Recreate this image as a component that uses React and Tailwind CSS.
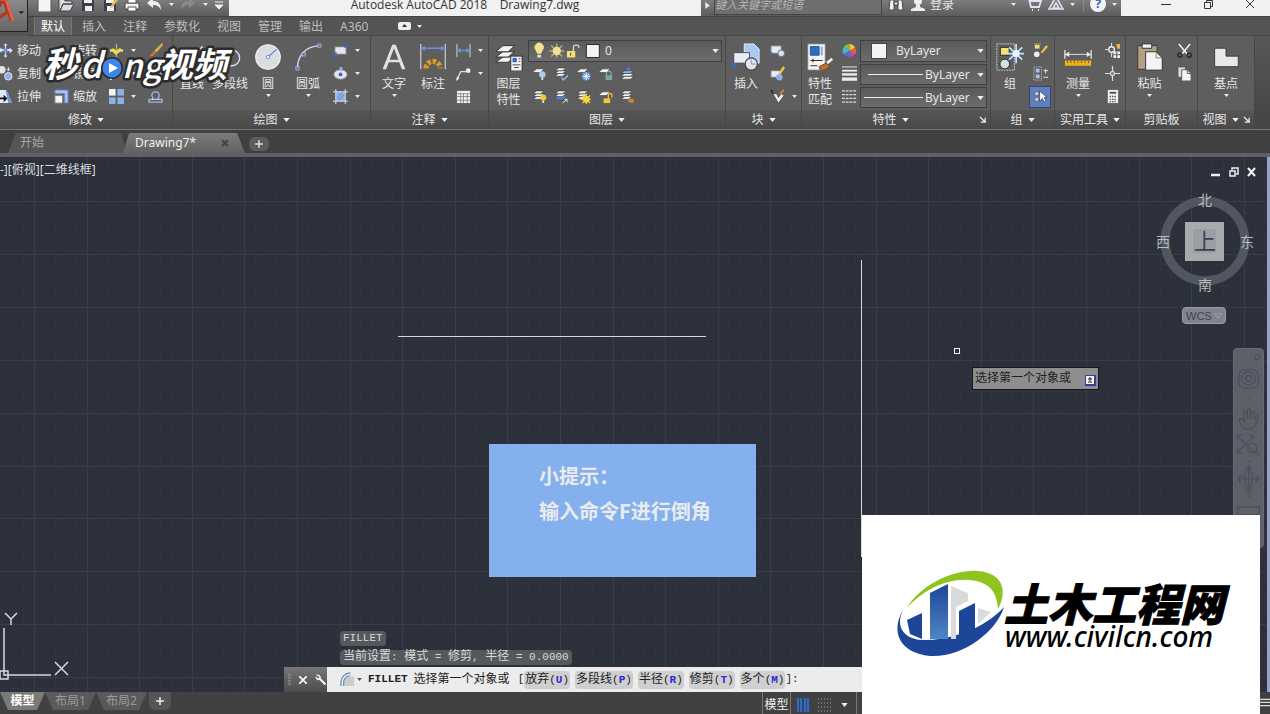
import React, { useState } from "react";

const Caret = ({ className = "w-[6px] h-[4px]" }) => (
  <svg viewBox="0 0 8 5" className={className} fill="#eeeeee" aria-hidden="true">
    <path d="M0 0h8L4 5z" />
  </svg>
);

const Svg = ({ box = 16, className = "w-4 h-4", children }) => (
  <svg viewBox={`0 0 ${box} ${box}`} className={className} fill="none" aria-hidden="true">
    {children}
  </svg>
);

// one stack of sheets, reused by most of the layer icons
const Sheets = () => (
  <g fill="#f0f0f0" stroke="#333" strokeWidth="0.6">
    <path d="M1 11l4-3h8l-4 3z" />
    <path d="M1 8l4-3h8L9 8z" />
    <path d="M1 5l4-3h8L9 5z" />
  </g>
);

const Sheet = () => <path d="M0 7l5-4h8L9 7z" fill="#f0f0f0" stroke="#333" strokeWidth="0.6" />;

const small = {
  move: (
    <>
      <path d="M8 0l3 3H9v3h3V4l4 4-4 4V9H9v4h2l-3 3-3-3h2V9H4v2L0 8l4-4v2h3V3H5z" fill="#dfe6f5" stroke="#3b4a6b" strokeWidth="0.6" />
      <rect x="6" y="6" width="4" height="4" fill="#6f93d8" />
    </>
  ),
  copy: (
    <>
      <circle cx="4" cy="4" r="4" fill="#e4e4e4" />
      <circle cx="11" cy="11" r="4" fill="#8fb0e6" stroke="#dfe8f7" />
      <path d="M11 1v4M9 3l2 2 2-2" stroke="#eee" />
    </>
  ),
  stretch: (
    <>
      <path d="M2 1h7l6 14H2z" fill="#dfe8f7" />
      <path d="M9 1l6 14h-4L8 1z" fill="#6f93d8" />
      <path d="M1 9h5V6l4 4-4 4v-3H1z" fill="#111" />
    </>
  ),
  rotate: (
    <>
      <path d="M3 10a5 5 0 1 1 5 5" stroke="#dfe8f7" strokeWidth="2" />
      <path d="M8 12v4l-4-2z" fill="#dfe8f7" />
    </>
  ),
  mirror: (
    <>
      <path d="M7 2v12H1z" fill="#eee" />
      <path d="M9 2v12h6z" fill="#6f93d8" />
    </>
  ),
  scale: (
    <>
      <path d="M1 1h14v14h-4V5H1z" fill="#a9c3f0" stroke="#5b7fc4" />
      <rect x="1" y="7" width="8" height="8" fill="#f4f4f4" stroke="#888" />
    </>
  ),
  trim: (
    <>
      <path d="M1 8h6M10 8h5" stroke="#eee" strokeWidth="2" />
      <path d="M8 1v14" stroke="#8fb0e6" strokeWidth="1.5" />
    </>
  ),
  fillet: <path d="M2 15V9a7 7 0 0 1 7-7h5" stroke="#dfe8f7" strokeWidth="2" />,
  array: (
    <>
      <rect x="0" y="0" width="7" height="7" fill="#f4f4f4" />
      <rect x="9" y="0" width="7" height="7" fill="#8fb0e6" />
      <rect x="0" y="9" width="7" height="7" fill="#8fb0e6" />
      <rect x="9" y="9" width="7" height="7" fill="#8fb0e6" />
    </>
  ),
  erase: (
    <>
      <path d="M15 0L7 8l2 2 7-8z" fill="#e5b04a" />
      <path d="M7 8l2 2-4 4H1z" fill="#c9713a" />
    </>
  ),
  offset: (
    <>
      <path d="M1 14h14v-3h-3c-2 0-1-2 0-4a4 4 0 1 0-8 0c1 2 2 4 0 4H1z" stroke="#9db9ea" strokeWidth="1.4" />
      <path d="M4 11h8" stroke="#dfe8f7" />
    </>
  ),
  rect: (
    <>
      <rect x="2" y="4" width="12" height="8" fill="#e2e5ec" stroke="#777" />
      <rect x="0" y="10" width="4" height="4" fill="#4468b0" />
      <rect x="12" y="1" width="4" height="4" fill="#4468b0" />
    </>
  ),
  ellipse: (
    <>
      <ellipse cx="8" cy="9" rx="7" ry="5" fill="#e2e5ec" stroke="#8f98ab" />
      <circle cx="8" cy="9" r="2" fill="#4468b0" />
      <rect x="7" y="1" width="3" height="4" fill="#8fb0e6" />
    </>
  ),
  hatch: (
    <>
      <rect x="3" y="3" width="10" height="10" fill="#8fb0e6" />
      <path d="M3 0v16M13 0v16M0 3h16M0 13h16" stroke="#dfe8f7" />
      <path d="M4 10l6-6M6 12l6-6" stroke="#5f83c8" />
    </>
  ),
  linear: (
    <>
      <path d="M1 1v14M15 1v14" stroke="#ddd" />
      <path d="M2 8h12" stroke="#6a8fe0" strokeWidth="1.5" />
      <path d="M1 8l4-3v6zM15 8l-4-3v6z" fill="#6a8fe0" />
    </>
  ),
  leader: (
    <>
      <path d="M1 15l4-9h6" stroke="#ddd" strokeWidth="1.4" />
      <circle cx="13" cy="5" r="2.5" fill="#eee" />
      <path d="M0 16l1-5 3 2z" fill="#ddd" />
    </>
  ),
  table: (
    <>
      <rect x="1" y="2" width="14" height="13" fill="#f0f0f0" />
      <path d="M1 5h14M1 8h14M1 12h14M5 5v10M8 5v10M12 5v10" stroke="#777" strokeWidth="0.8" />
    </>
  ),
  layOff: (
    <>
      <Sheet />
      <circle cx="11" cy="9" r="3.4" fill="#a9cdf5" />
      <path d="M10 12h2v3h-2z" fill="#ddd" />
    </>
  ),
  layMatch: (
    <>
      <Sheets />
      <path d="M8 12l2 3 5-5" stroke="#8fb5d8" strokeWidth="1.6" />
    </>
  ),
  layFreeze: (
    <>
      <Sheet />
      <circle cx="11" cy="11" r="4.6" fill="#5f92df" />
      <path d="M11 7v8M7 11h8M8 8l6 6M14 8l-6 6" stroke="#fff" strokeWidth="0.9" />
    </>
  ),
  layLock: (
    <>
      <Sheet />
      <rect x="8" y="10" width="7" height="5" fill="#7fa3ac" />
      <path d="M9 10V8a2 2 0 0 1 5 0v2" stroke="#a9c3cc" />
    </>
  ),
  layCurrent: (
    <>
      <path d="M1 14l4-3h10l-4 3zM1 11l4-3h10l-4 3z" fill="#f0f0f0" stroke="#333" strokeWidth="0.6" />
      <path d="M1 8l4-3h10l-4 3z" fill="#8fb0e6" stroke="#333" strokeWidth="0.6" />
      <circle cx="9" cy="3" r="2" fill="#4d7bd0" />
    </>
  ),
  layOn: (
    <>
      <Sheets />
      <circle cx="12" cy="9" r="3.2" fill="#f5c53a" />
      <path d="M11 12h2v3h-2z" fill="#ddd" />
    </>
  ),
  layIso: (
    <>
      <Sheets />
      <path d="M1 11l4-3h8l-4 3z" fill="#4d7bd0" />
      <path d="M9 15l5-4M14 11v3M14 11h-3" stroke="#dfe8f7" />
    </>
  ),
  layThaw: (
    <>
      <Sheets />
      <path d="M11 5v11M5 11h11M7 7l8 8M15 7l-8 8" stroke="#f3c935" strokeWidth="1.4" />
      <circle cx="11" cy="11" r="3.6" fill="#f7d832" />
    </>
  ),
  layUnlock: (
    <>
      <Sheet />
      <rect x="6" y="10" width="7" height="5" fill="#f5c53a" />
      <path d="M11 10V7a2 2 0 0 1 4 0v2" stroke="#f5c53a" strokeWidth="1.3" />
    </>
  ),
  layPrev: (
    <>
      <Sheets />
      <path d="M9 10l6 1-1 4-5-1z" fill="#d58434" />
    </>
  ),
  blockNew: (
    <>
      <rect x="1" y="3" width="11" height="8" fill="#e8ecf5" stroke="#777" />
      <circle cx="12" cy="11" r="3.6" fill="#dde3ee" stroke="#667" />
      <path d="M0 10h3v3H0z" fill="#4468b0" />
    </>
  ),
  blockEdit: (
    <>
      <rect x="1" y="5" width="10" height="7" fill="#e8ecf5" stroke="#777" />
      <circle cx="10" cy="12" r="3.4" fill="#8fb0e6" />
      <path d="M9 8l5-8 2 2-5 7z" fill="#f5c53a" />
    </>
  ),
  blockAttr: (
    <>
      <path d="M1 1l5 7" stroke="#222" strokeWidth="1.5" />
      <path d="M3 5l6 10 6-8-3-2-3 4-2-4z" fill="#f0f0f0" stroke="#333" strokeWidth="0.6" />
      <path d="M11 5l4-4" stroke="#d58434" strokeWidth="2" />
    </>
  ),
  wheel: (
    <>
      <path d="M8 8V1a7 7 0 0 1 6 4z" fill="#f6c243" />
      <path d="M8 8l6-3a7 7 0 0 1 0 7z" fill="#e3653b" />
      <path d="M8 8l6 4a7 7 0 0 1-6 3z" fill="#c04bb0" />
      <path d="M8 8v7a7 7 0 0 1-6-3z" fill="#4b6fd6" />
      <path d="M8 8l-6 4a7 7 0 0 1 0-8z" fill="#48b7c6" />
      <path d="M8 8L2 4a7 7 0 0 1 6-3z" fill="#7ac14b" />
    </>
  ),
  weight: (
    <>
      <path d="M0 1h16" stroke="#eee" />
      <path d="M0 5h16" stroke="#eee" strokeWidth="2" />
      <path d="M0 9h16" stroke="#eee" strokeWidth="2.5" />
      <path d="M0 14h16" stroke="#eee" strokeWidth="3.5" />
    </>
  ),
  dashes: <path d="M0 2h16M0 6h16M0 10h16M0 14h16" stroke="#ddd" strokeWidth="1.2" strokeDasharray="3 1" />,
  ungroup: (
    <>
      <rect x="2" y="2" width="5" height="4" fill="#f2e36a" />
      <path d="M1 1h8" stroke="#ccc" strokeDasharray="1 1" />
      <circle cx="4" cy="12" r="3" fill="#eee" />
      <path d="M8 10l6-8 2 2-6 7z" fill="#f0bd55" />
    </>
  ),
  groupEdit: (
    <>
      <rect x="1" y="1" width="8" height="14" stroke="#ccc" strokeDasharray="1 1" />
      <path d="M3 3h4v4H3zM3 9h4v4H3z" fill="#a9c3f0" />
      <path d="M11 5h5M13.5 3v5M11 12h5" stroke="#eee" />
    </>
  ),
  groupPick: (
    <>
      <path d="M2 3h4v4H2zM2 9h4v4H2z" fill="#c8d8f5" stroke="#444" strokeWidth="0.6" />
      <path d="M7 2v11l3-3 2 4 2-1-2-4h3z" fill="#f4f4f4" stroke="#222" strokeWidth="0.6" />
    </>
  ),
  quickSel: (
    <>
      <circle cx="7" cy="7" r="3" stroke="#eee" strokeWidth="1.4" />
      <path d="M7 0v4M7 10v5M0 7h4" stroke="#eee" />
      <rect x="9" y="9" width="7" height="7" fill="#eee" />
      <path d="M9 12.5h7M12.5 9v7" stroke="#555" />
      <path d="M12 1h4v5h-3z" fill="#f0b63a" />
    </>
  ),
  point: (
    <>
      <path d="M8 0v16M0 8h16" stroke="#ddd" strokeWidth="1.3" />
      <circle cx="8" cy="8" r="2.4" fill="#888" stroke="#eee" />
    </>
  ),
  calc: (
    <>
      <rect x="3" y="1" width="11" height="14" fill="#f0f0f0" />
      <path d="M5 4h7" stroke="#555" strokeWidth="2" />
      <path d="M5 8h7M5 11h7M5 13.5h7" stroke="#555" strokeWidth="1.4" strokeDasharray="1.5 1" />
    </>
  ),
  cut: (
    <>
      <path d="M2 1l9 11M14 1L5 12" stroke="#f4f4f4" strokeWidth="1.6" />
      <circle cx="3" cy="13" r="2.2" stroke="#222" strokeWidth="1.4" />
      <circle cx="13" cy="13" r="2.2" stroke="#222" strokeWidth="1.4" />
    </>
  ),
  copyClip: (
    <>
      <path d="M1 1h8v11H1z" fill="#ddd" stroke="#555" />
      <path d="M5 4h6l4 4v8H5z" fill="#f4f4f4" stroke="#555" />
      <path d="M11 4v4h4" stroke="#555" />
    </>
  ),
};

const big = {
  line: <path d="M6 28L28 4" stroke="#d9dde6" strokeWidth="2" />,
  pline: (
    <>
      <path d="M2 26h16a9 9 0 0 0 0-18H6" stroke="#d9dde6" strokeWidth="1.6" />
      <rect x="3" y="5" width="4" height="4" fill="#4468b0" />
    </>
  ),
  circle: (
    <>
      <circle cx="16" cy="16" r="14" fill="#dcdde2" stroke="#f2f2f2" strokeWidth="1.4" />
      <path d="M16 16l10-9" stroke="#5d87cf" strokeWidth="1.4" />
      <circle cx="16" cy="16" r="2" fill="#fff" stroke="#5d87cf" />
    </>
  ),
  arc: (
    <>
      <path d="M4 29C4 14 13 4 29 3" stroke="#d3d9e6" strokeWidth="1.6" />
      <path d="M2 27h4v4H2zM9 11h4v4H9zM27 1h4v4h-4z" fill="#5b7cc2" stroke="#cbd6ee" strokeWidth="0.6" />
    </>
  ),
  text: <path d="M3 30L14 2h4l11 28h-4l-3-8H10l-3 8zM11 19h10L16 6z" fill="#e2e2e2" fillRule="evenodd" />,
  dim: (
    <>
      <path d="M2 1v29M30 1v29" stroke="#ccc" strokeWidth="1.4" />
      <path d="M3 6h26" stroke="#6a8fe0" strokeWidth="1.8" />
      <path d="M2 6l5-3v6zM30 6l-5-3v6z" fill="#6a8fe0" />
      <path d="M8 29a8 8 0 0 1 16 0" stroke="#d99a26" strokeWidth="6" strokeDasharray="4 2" />
    </>
  ),
  layers: (
    <>
      <g fill="#f4f4f4" stroke="#2b2b2b">
        <path d="M1 22l8-6h13l-7 6z" />
        <path d="M1 16l8-6h13l-7 6z" />
        <path d="M1 10l8-7h13l-7 7z" />
      </g>
      <path d="M18 15h13v17H18z" fill="#f4f4f4" stroke="#222" />
      <path d="M20 17h5v5h-5z" fill="#2f6bd0" />
      <path d="M27 18h2M27 21h2M20 25h9M22 28h5" stroke="#333" />
    </>
  ),
  insert: (
    <>
      <path d="M14 1h11l6 6v16H14z" fill="#a9c9f2" stroke="#eef" />
      <path d="M2 11h18v12H2z" fill="#e8ecf5" stroke="#445" />
      <circle cx="22" cy="24" r="7" fill="#dfe5ef" stroke="#445" strokeWidth="1.4" />
      <path d="M22 24v-5M22 24h5" stroke="#889" />
      <path d="M0 23h5v5H0z" fill="#3f66b5" />
    </>
  ),
  match: (
    <>
      <path d="M2 1h20v30H2z" fill="#f4f4f4" stroke="#777" />
      <path d="M5 4h10v10H5z" fill="#2f6bc0" stroke="#1d4a90" />
      <path d="M18 4v10" stroke="#7b9fd8" strokeWidth="2" />
      <path d="M5 20h14M8 18v4M5 26h8" stroke="#333" strokeWidth="1.4" />
      <path d="M15 27l8-4 5 4-8 5c-3 0-5-2-5-5z" fill="#b3712c" stroke="#6b3d10" />
      <path d="M24 23l6-5" stroke="#eee" strokeWidth="3" />
    </>
  ),
  group: (
    <>
      <path d="M1 1h20v30H1z" stroke="#ddd" strokeDasharray="2 1" />
      <path d="M5 5h10v9H5z" fill="#efe277" stroke="#222" />
      <circle cx="10" cy="24" r="5.5" fill="#cfe0ea" stroke="#222" />
      <path d="M23 1v22M13 12h19M15 5l15 14M30 5L15 19" stroke="#bfe0ff" strokeWidth="2" />
      <circle cx="23" cy="12" r="4" fill="#eaf6ff" />
    </>
  ),
  measure: (
    <>
      <path d="M1 8v10M31 8v10" stroke="#eee" strokeWidth="1.4" />
      <path d="M2 13h28" stroke="#eee" />
      <path d="M1 13l5-3v6zM31 13l-5-3v6z" fill="#eee" />
      <path d="M1 20h30v6H1z" fill="#e8b51f" />
      <path d="M4 20v3M8 20v3M12 20v3M16 20v3M20 20v3M24 20v3M28 20v3" stroke="#7b5b05" />
    </>
  ),
  paste: (
    <>
      <path d="M2 3h22v27H2z" fill="#b59f86" stroke="#3a3028" />
      <path d="M7 1h11v5H7z" fill="#f2f2f2" stroke="#222" />
      <path d="M11 10h12l7 7v14H11z" fill="#f4f4f4" stroke="#222" />
      <path d="M23 10v7h7" stroke="#777" />
    </>
  ),
  base: <path d="M3 6h13v9h14v12H3z" fill="#e8e8e8" stroke="#333" />,
};

const SmallBtn = ({ icon, name, caret, active }) => (
  <div className="flex h-[23px] items-center gap-2">
    <button
      aria-label={name}
      className={
        active
          ? "flex h-[22px] w-[22px] items-center justify-center border border-[#2f4374] bg-[#5f7fbe]"
          : "flex h-[22px] w-[22px] items-center justify-center"
      }
    >
      <Svg className="h-[15px] w-[15px]">{small[icon]}</Svg>
    </button>
    {caret && <Caret className="-ml-1 h-[3px] w-[5px]" />}
  </div>
);

const TextBtn = ({ icon, children }) => (
  <button className="flex h-[23px] items-center gap-1 whitespace-nowrap">
    <Svg className="h-[15px] w-[15px]">{small[icon]}</Svg>
    {children}
  </button>
);

const BigBtn = ({ icon, lines, caret, className = "w-10" }) => (
  <button className={`flex shrink-0 flex-col items-center pt-1 ${className}`}>
    <Svg box={32} className="my-[3px] h-7 w-7">{big[icon]}</Svg>
    <span className="mt-[2px] leading-4">
      {lines.map((l) => (
        <span key={l} className="block whitespace-nowrap">{l}</span>
      ))}
    </span>
    {caret && <Caret className="mt-[2px] h-[3px] w-[5px]" />}
  </button>
);

const Panel = ({ title, width, caret = true, corner, children }) => (
  <section className={`flex shrink-0 flex-col border-r border-[#474747] bg-[#5e5e5e] ${width}`}>
    <div className="flex h-[74px]">{children}</div>
    <div className="flex h-[19px] items-center bg-linear-to-b from-[#565656] to-[#494949]">
      <h2 className="flex flex-1 items-center justify-center gap-[5px] whitespace-nowrap">
        {title}
        {caret && <Caret className="h-[4px] w-[7px]" />}
      </h2>
      {corner && (
        <button aria-label={`${title}设置`} className="pr-1">
          <Svg box={8} className="h-[7px] w-[7px]">
            <path d="M1 1l5 5M7 2v5H2" stroke="#eee" strokeWidth="1.5" />
          </Svg>
        </button>
      )}
    </div>
  </section>
);

const Combo = ({ label, value, className = "", children }) => (
  <label className={`flex items-center border border-[#3f3f3f] bg-linear-to-b from-[#5a5a5a] to-[#6c6c6c] pr-[2px] ${className}`}>
    {children}
    <select aria-label={label} className="flex-1 appearance-none bg-transparent text-xs leading-4 outline-none">
      <option>{value}</option>
    </select>
    <Caret className="h-[4px] w-[7px]" />
  </label>
);

const quick = [
  ["新建", <path key="a" d="M2 0h9l4 4v12H2z" fill="#f4f4f4" stroke="#555" />],
  ["打开", <path key="a" d="M1 3h5l1 2h7v3H5l-3 7H1zM5 8h11l-4 7H2z" fill="#d9dde6" stroke="#444" />],
  ["保存", <g key="a"><path d="M2 2h12v13H2z" fill="#3a3f4a" /><path d="M4 2h8v5H4zM5 10h7v5H5z" fill="#eee" /></g>],
  ["另存为", <g key="a"><path d="M2 2h12v13H2z" fill="#3a3f4a" /><path d="M4 2h8v5H4zM5 10h7v5H5z" fill="#eee" /><path d="M8 11l6-9 2 2-6 8z" fill="#f0bd55" /></g>],
  ["打印", <g key="a"><path d="M1 7h14v6H1z" fill="#f0f0f0" stroke="#444" /><path d="M4 2h8v5H4zM4 11h8v4H4z" fill="#fff" stroke="#555" /></g>],
  ["放弃", <path key="a" d="M1 7l6-5v3c5 0 8 3 8 9-2-4-4-5-8-5v3z" fill="#f0f0f0" />],
];

const menus = ["插入", "注释", "参数化", "视图", "管理", "输出", "A360"];

function TitleBar() {
  return (
    <div className="flex h-4 items-end overflow-hidden bg-linear-to-b from-[#7d7d7d] to-[#5c5c5c]">
      <div className="flex w-[201px] items-end pb-1 pl-[5px]">
        {quick.map(([name, art]) => (
          <button key={name} aria-label={name} className="flex w-[22px] justify-center">
            <Svg>{art}</Svg>
          </button>
        ))}
        <span className="flex h-4 w-3 items-center justify-center"><Caret className="h-[3px] w-[5px]" /></span>
        <button aria-label="重做" className="flex w-[22px] justify-center">
          <Svg><path d="M15 7L9 2v3c-5 0-8 3-8 9 2-4 4-5 8-5v3z" fill="#8a8a8a" /></Svg>
        </button>
        <span className="flex h-4 w-3 items-center justify-center"><Caret className="h-[3px] w-[5px]" /></span>
        <button aria-label="自定义" className="flex w-4 justify-center">
          <Svg><path d="M4 6h8M4 9h8l-4 4z" stroke="#eee" fill="#eee" /></Svg>
        </button>
      </div>
      <div className="flex h-4 flex-1 items-center justify-center overflow-hidden bg-[#f1f1f1] pb-[6px] text-[#333]">
        <span className="whitespace-pre font-['Open_Sans',sans-serif] text-xs leading-4">{"Autodesk AutoCAD 2018    Drawing7.dwg"}</span>
      </div>
      <div className="flex h-4 w-[420px] items-end">
        <button aria-label="展开" className="flex h-4 w-[13px] items-start justify-center pt-[2px]">
          <svg viewBox="0 0 5 8" className="h-[7px] w-[5px]" fill="#eee"><path d="M0 0l5 4-5 4z" /></svg>
        </button>
        <input
          aria-label="搜索"
          placeholder="键入关键字或短语"
          className="mb-px h-5 w-[168px] shrink-0 border border-[#444] bg-[#6e6e6e] pb-px text-[11px] leading-4 italic placeholder-[#b5b5b5] outline-none"
        />
        <button aria-label="查找" className="ml-1 flex w-5 justify-center pb-1">
          <Svg><path d="M2 4h4v10H1zM10 4h4l1 10h-5zM6 6h4v3H6z" fill="#f0f0f0" stroke="#333" strokeWidth="0.8" /></Svg>
        </button>
        <button className="flex items-end gap-1 pl-1 text-xs text-[#e4e4e4]">
          <Svg className="mb-1 h-4 w-4">
            <circle cx="8" cy="5" r="4" fill="#eee" />
            <path d="M6 9h4v2l5 2v2H1v-2l5-2z" fill="#eee" />
          </Svg>
          <span className="pb-[3px] leading-4">登录</span>
        </button>
        <div className="flex flex-1 items-end justify-end gap-[6px] pb-1">
          <span className="flex h-4 items-center pr-1"><Caret className="h-[3px] w-[5px]" /></span>
          <button aria-label="购物车">
            <Svg><path d="M0 3h3l2 8h8l2-6H4M6 14h1M12 14h1" stroke="#dfe4f2" strokeWidth="1.8" /></Svg>
          </button>
          <button aria-label="应用">
            <Svg><path d="M8 1l7 12H1zM8 7l3 5H5z" stroke="#dfe4f2" strokeWidth="1.6" /></Svg>
          </button>
          <span className="flex h-4 items-center border-r border-[#888] pr-2"><Caret className="h-[3px] w-[5px]" /></span>
          <button aria-label="帮助" className="flex h-4 w-4 items-center justify-center rounded-full bg-[#f4f4f4] text-xs leading-4 font-bold text-[#2d59b5]">?</button>
          <span className="flex h-4 items-center pr-1"><Caret className="h-[3px] w-[5px]" /></span>
        </div>
      </div>
      <div className="flex h-4 w-[149px] items-start justify-end bg-[#f1f1f1] text-[#333]">
        <button aria-label="最小化" className="flex w-[43px] justify-center">
          <Svg box={10} className="h-[10px] w-[10px]"><path d="M0 4.5h10" stroke="#333" /></Svg>
        </button>
        <button aria-label="还原" className="flex w-[43px] justify-center">
          <Svg box={10} className="h-[10px] w-[10px]"><path d="M.5 2.5h6v6h-6zM2.5 2V.5h6v6H7" stroke="#333" /></Svg>
        </button>
        <button aria-label="关闭" className="flex w-[40px] justify-center">
          <Svg box={10} className="h-[10px] w-[10px]"><path d="M1 0l8 8M9 0L1 8" stroke="#333" /></Svg>
        </button>
      </div>
    </div>
  );
}

function Header() {
  return (
    <header className="flex bg-[#545454]">
      <button aria-label="应用程序菜单" className="flex h-8 w-7 items-start border-r border-b border-[#222] bg-linear-to-b from-[#8b8b8b] to-[#666]">
        <svg viewBox="0 0 28 31" className="h-[31px] w-7">
          <path d="M0 0h8l7 21H10L8 14 0 19v-4l6-4-3-9-3 6z" fill="#b8351f" />
          <path d="M5 0h3l7 21h-3z" fill="#e2674c" />
          <path d="M19 11h6l-3 3z" fill="#222" />
        </svg>
      </button>
      <div className="min-w-0 flex-1">
        <TitleBar />
        <nav className="flex h-5 items-stretch border-t border-b border-t-[#444] border-b-[#474747] pl-[6px] text-xs leading-5 text-[#bdbdbd]">
          <button className="w-[38px] border-x border-[#777] bg-[#646464] text-white">默认</button>
          <div className="ml-[10px] flex gap-[17px]">
            {menus.map((m) => (
              <button key={m}>{m}</button>
            ))}
          </div>
          <button aria-label="最小化功能区" className="ml-[30px] flex items-center gap-[6px]">
            <svg viewBox="0 0 13 8" className="h-2 w-[13px]">
              <rect width="13" height="8" rx="2" fill="#eee" />
              <path d="M4 5h5L6.500 2z" fill="#333" />
            </svg>
            <Caret className="h-[3px] w-[5px]" />
          </button>
        </nav>
      </div>
    </header>
  );
}

function Ribbon() {
  return (
    <div className="flex border-b border-[#777] bg-linear-to-b from-[#585858] to-[#444] text-xs leading-4 text-[#e6e6e6]">
      <Panel title="修改" width="w-[173px]">
        <div className="flex flex-1 pt-[3px]">
          <div className="-ml-[2px] w-[56px]">
            <TextBtn icon="move">移动</TextBtn>
            <TextBtn icon="copy">复制</TextBtn>
            <TextBtn icon="stretch">拉伸</TextBtn>
          </div>
          <div className="w-[51px]">
            <TextBtn icon="rotate">旋转</TextBtn>
            <TextBtn icon="mirror">镜像</TextBtn>
            <TextBtn icon="scale">缩放</TextBtn>
          </div>
          <div className="w-[39px]">
            <SmallBtn icon="trim" name="修剪" caret />
            <SmallBtn icon="fillet" name="圆角" caret />
            <SmallBtn icon="array" name="阵列" caret />
          </div>
          <div>
            <SmallBtn icon="erase" name="删除" />
            <SmallBtn icon="scale" name="分解" />
            <SmallBtn icon="offset" name="偏移" />
          </div>
        </div>
      </Panel>
      <Panel title="绘图" width="w-[198px]">
        <BigBtn icon="line" lines={["直线"]} className="w-[38px]" />
        <BigBtn icon="pline" lines={["多段线"]} className="w-[38px]" />
        <BigBtn icon="circle" lines={["圆"]} caret className="w-[38px]" />
        <BigBtn icon="arc" lines={["圆弧"]} caret className="w-[42px]" />
        <div className="pt-[3px]">
          <SmallBtn icon="rect" name="矩形" caret />
          <SmallBtn icon="ellipse" name="椭圆" caret />
          <SmallBtn icon="hatch" name="图案填充" caret />
        </div>
      </Panel>
      <Panel title="注释" width="w-[118px]">
        <BigBtn icon="text" lines={["文字"]} caret className="w-[46px]" />
        <BigBtn icon="dim" lines={["标注"]} className="w-8" />
        <div className="pl-[3px] pt-[3px]">
          <SmallBtn icon="linear" name="线性" caret />
          <SmallBtn icon="leader" name="引线" caret />
          <SmallBtn icon="table" name="表格" />
        </div>
      </Panel>
      <Panel title="图层" width="w-[237px]">
        <BigBtn icon="layers" lines={["图层", "特性"]} className="w-[39px]" />
        <div className="flex-1 pr-[3px] pt-1">
          <Combo label="图层" value="0" className="h-[22px]">
            <svg viewBox="0 0 80 20" className="mr-[2px] h-5 w-[74px]" aria-hidden="true">
              <path d="M7 9a5 5 0 1 1 8 0l-2 4H9z" fill="#f5e18b" />
              <path d="M9 14h4v3H9z" fill="#ddd" />
              <path d="M30 2v15M22 10h16M24 4l12 12M36 4L24 16" stroke="#b9ad7c" strokeWidth="1.5" />
              <circle cx="30" cy="10" r="4.5" fill="#f2df9a" />
              <path d="M41 10h9v7h-9z" fill="#efe277" />
              <path d="M48 10V6c0-3 6-3 6 0v1" stroke="#ddd" fill="none" strokeWidth="1.3" />
              <path d="M45 12v3" stroke="#333" />
              <path d="M62 3h14v14H62z" fill="#f4f4f4" stroke="#222" />
            </svg>
          </Combo>
          <div className="flex">
            <SmallBtn icon="layOff" name="关" />
            <SmallBtn icon="layMatch" name="匹配图层" />
            <SmallBtn icon="layFreeze" name="冻结" />
            <SmallBtn icon="layLock" name="锁定" />
            <SmallBtn icon="layCurrent" name="置为当前" />
          </div>
          <div className="flex">
            <SmallBtn icon="layOn" name="打开所有图层" />
            <SmallBtn icon="layIso" name="隔离" />
            <SmallBtn icon="layThaw" name="解冻" />
            <SmallBtn icon="layUnlock" name="解锁" />
            <SmallBtn icon="layPrev" name="上一个" />
          </div>
        </div>
      </Panel>
      <Panel title="块" width="w-[76px]">
        <BigBtn icon="insert" lines={["插入"]} />
        <div className="pt-[3px]">
          <SmallBtn icon="blockNew" name="创建" />
          <SmallBtn icon="blockEdit" name="编辑" />
          <SmallBtn icon="blockAttr" name="编辑属性" caret />
        </div>
      </Panel>
      <Panel title="特性" width="w-[189px]" corner>
        <BigBtn icon="match" lines={["特性", "匹配"]} className="w-9" />
        <div className="pt-[3px]">
          <SmallBtn icon="wheel" name="颜色" />
          <SmallBtn icon="weight" name="线宽" />
          <SmallBtn icon="dashes" name="线型" />
        </div>
        <div className="flex flex-1 flex-col gap-[2px] pr-[3px] pt-1">
          <Combo label="对象颜色" value="ByLayer" className="h-[22px]">
            <span className="ml-[10px] mr-[9px] h-4 w-4 border border-[#444] bg-[#f4f4f4]"></span>
          </Combo>
          <Combo label="线宽" value="ByLayer" className="h-[21px]">
            <span className="ml-[7px] mr-[2px] h-px w-[55px] bg-[#eee]"></span>
          </Combo>
          <Combo label="线型" value="ByLayer" className="h-[21px]">
            <span className="ml-[3px] mr-[2px] h-px w-[59px] bg-[#eee]"></span>
          </Combo>
        </div>
      </Panel>
      <Panel title="组" width="w-[64px]">
        <BigBtn icon="group" lines={["组"]} className="w-[38px]" />
        <div className="pt-[3px]">
          <SmallBtn icon="ungroup" name="解除编组" />
          <SmallBtn icon="groupEdit" name="组编辑" />
          <SmallBtn icon="groupPick" name="组选择" active />
        </div>
      </Panel>
      <Panel title="实用工具" width="w-[71px]">
        <BigBtn icon="measure" lines={["测量"]} caret className="w-[46px]" />
        <div className="pt-[3px]">
          <SmallBtn icon="quickSel" name="快速选择" />
          <SmallBtn icon="point" name="点坐标" />
          <SmallBtn icon="calc" name="快速计算器" />
        </div>
      </Panel>
      <Panel title="剪贴板" width="w-[72px]" caret={false}>
        <BigBtn icon="paste" lines={["粘贴"]} caret className="w-[47px]" />
        <div className="pt-[3px]">
          <SmallBtn icon="cut" name="剪切" />
          <SmallBtn icon="copyClip" name="复制剪裁" />
        </div>
      </Panel>
      <Panel title="视图" width="w-[57px]" corner>
        <BigBtn icon="base" lines={["基点"]} caret className="w-14" />
      </Panel>
    </div>
  );
}

function FileTabs() {
  return (
    <div className="flex h-[27px] items-end border-b-4 border-[#606060] bg-[#404040] pl-2 text-xs text-[#a8a8a8]">
      <button className="h-5 w-[119px] rounded-t-lg bg-[#555] pl-3 text-left [clip-path:polygon(8px_0,calc(100%-6px)_0,100%_100%,0_100%)]">开始</button>
      <div className="-ml-1 flex h-5 w-[122px] items-center justify-between rounded-t-lg bg-linear-to-b from-[#7b7b7b] to-[#626262] pl-3 pr-4 text-[#f0f0f0] [clip-path:polygon(6px_0,calc(100%-8px)_0,100%_100%,0_100%)]">
        <button>Drawing7*</button>
        <button aria-label="关闭图形">
          <Svg box={8} className="h-2 w-2"><path d="M1 1l6 6M7 1L1 7" stroke="#444" strokeWidth="2" /></Svg>
        </button>
      </div>
      <button aria-label="新图形" className="mb-[2px] ml-1 flex h-[14px] w-5 items-center justify-center rounded-md bg-[#5c5c5c]">
        <Svg box={8} className="h-2 w-2"><path d="M4 0v8M0 4h8" stroke="#ddd" strokeWidth="1.5" /></Svg>
      </button>
    </div>
  );
}

// drafting grid: one bright line for every five faint ones
function Grid() {
  const xs = Array.from({ length: 190 }, (_, i) => i);
  const vx = (i) => Math.round(34 + (i - 5) * 10.52);
  const hy = (i) => Math.round(44 + (i - 5) * 10.58);
  const rows = (major) => xs.filter((i) => (i % 5 === 0) === major);
  return (
    <svg className="absolute inset-0 h-full w-full" shapeRendering="crispEdges" aria-hidden="true">
      {[false, true].map((major) => (
        <path
          key={String(major)}
          stroke={major ? "#383e49" : "#2f343f"}
          d={rows(major).map((i) => `M${vx(i)} 0V2000M0 ${hy(i)}H3000`).join("")}
        />
      ))}
      <path d="M398 179.500H706M861.500 103V400" stroke="#d8d8d8" />
      <path d="M954.500 191.500h5v5h-5z" stroke="#eee" fill="none" />
    </svg>
  );
}

function ViewCube() {
  return (
    <svg viewBox="0 0 100 104" className="absolute right-[12px] top-[34px] h-[104px] w-[100px] font-['Noto_Sans_CJK_SC',sans-serif]">
      <circle cx="50" cy="50" r="40" stroke="#51565f" strokeWidth="9" fill="none" />
      <rect x="30" y="31" width="39" height="39" fill="#a7abab" />
      <rect x="38" y="38" width="23" height="24" fill="#9b9fa5" />
      <g fill="#b8babd" fontSize="14" textAnchor="middle">
        <text x="50" y="14">北</text>
        <text x="50" y="99">南</text>
        <text x="8" y="56">西</text>
        <text x="92" y="56">东</text>
      </g>
      <text x="50" y="58" fontSize="22" textAnchor="middle" fill="#3c414c">上</text>
    </svg>
  );
}

function NavBar() {
  return (
    <div className="absolute right-[3px] top-[191px] h-[200px] w-[31px] rounded border border-[#666b75] bg-[#5b6069]">
      <svg viewBox="0 0 30 198" className="h-full w-full" fill="none" stroke="#4b505a" strokeWidth="1.3" aria-hidden="true">
        <circle cx="24" cy="5" r="2.5" />
        <rect x="5" y="18" width="20" height="19" rx="6" />
        <circle cx="15" cy="27" r="7" />
        <circle cx="15" cy="27" r="3" />
        <path d="M14 47h3" />
        <path d="M9 78C7 74 4 71 6 69s4 2 5 3l-1-9c0-2 3-2 3 0l1 6V60c0-2 3-2 3 0v9l1-7c0-2 3-2 3 0v8l2-4c2-1 3 0 2 2l-3 8c-2 4-11 4-13 2z" />
        <path d="M4 87l16 16M20 87L4 103M4 90v-4h4M20 90v-4h-4M4 99v5h4" />
        <circle cx="19" cy="99" r="5" />
        <path d="M22 103l4 4M14 113h3" />
        <path d="M15 118v26M5 131h20M12 121l3-4 3 4M12 141l3 4 3-4M8 127l-4 4 4 4M22 127l4 4-4 4" />
        <ellipse cx="15" cy="131" rx="4" ry="10" />
        <path d="M14 149h3M4 160h22v8H4z" />
      </svg>
    </div>
  );
}

const Opt = ({ name, hot }) => (
  <button className="rounded bg-[#cfcfcf] px-[1px] leading-[18px]">
    <span className="text-xs">{name}</span>(<span className="font-bold text-[#2a2ad8]">{hot}</span>)
  </button>
);

function CommandLine() {
  return (
    <div className="absolute bottom-0 left-[284px] right-[10px] font-['Liberation_Mono','Noto_Sans_CJK_SC',monospace] text-[11px]">
      <div className="ml-14 flex flex-col items-start gap-[4px] pb-[2px] leading-[15px] text-[#d8d8d8]">
        <p className="rounded-sm bg-[#55585c] px-[3px]">FILLET</p>
        <p className="whitespace-nowrap rounded-sm bg-[#55585c] px-[3px]">
          <span className="text-xs leading-[15px]">当前设置</span>: <span className="text-xs leading-[15px]">模式</span> = <span className="text-xs leading-[15px]">修剪</span>, <span className="text-xs leading-[15px]">半径</span> = 0.0000
        </p>
      </div>
      <div className="flex h-[25px] items-stretch bg-[#ececec] text-[#222]">
        <div className="flex w-[43px] shrink-0 items-center gap-2 bg-linear-to-b from-[#777] to-[#4c4c4c] pl-1">
          <svg viewBox="0 0 4 16" className="h-4 w-1"><path d="M1 0v16M3 0v16" stroke="#bbb" strokeDasharray="1 1" /></svg>
          <button aria-label="关闭命令行">
            <Svg box={8} className="h-2 w-2"><path d="M0 0l8 8M8 0L0 8" stroke="#f4f4f4" strokeWidth="1.8" /></Svg>
          </button>
          <button aria-label="自定义">
            <Svg className="h-3 w-3"><path d="M1 1c4-1 7 1 7 5l7 7-2 2-7-7C3 9 0 6 1 3l3 3 2-2z" fill="#f4f4f4" /></Svg>
          </button>
        </div>
        <div className="flex items-center gap-[6px] whitespace-nowrap pl-[13px]">
          <button aria-label="最近使用的命令" className="flex items-center gap-[2px]">
            <Svg className="h-[15px] w-[15px]">
              <path d="M5 15V11a6 6 0 0 1 6-6h4v10z" fill="#ccc" />
              <path d="M1 15v-4A10 10 0 0 1 11 1M4 15v-4a7 7 0 0 1 7-7" stroke="#5f86b8" strokeWidth="1.3" />
            </Svg>
            <svg viewBox="0 0 8 5" className="h-[3px] w-[5px]"><path d="M0 0h8L4 5z" fill="#555" /></svg>
          </button>
          <span className="font-bold">FILLET</span>
          <span className="text-xs">选择第一个对象或</span>
        </div>
        <div className="flex items-center gap-[5px] whitespace-nowrap pl-2">
          <span className="-mr-[5px]">[</span>
          <Opt name="放弃" hot="U" />
          <Opt name="多段线" hot="P" />
          <Opt name="半径" hot="R" />
          <Opt name="修剪" hot="T" />
          <Opt name="多个" hot="M" />
          <span className="-ml-[5px]">]:</span>
        </div>
      </div>
    </div>
  );
}

function Canvas() {
  return (
    <main className="relative flex-1 overflow-hidden border-r-3 border-[#93a3c9] bg-[#2b303b]">
      <Grid />
      <p className="absolute left-0 top-[5px] whitespace-nowrap text-xs leading-4 text-[#dcdcdc]">-][俯视][二维线框]</p>

      <div className="absolute right-[10px] top-[10px] flex items-center gap-2">
        <button aria-label="最小化视口"><Svg box={10} className="h-[10px] w-[10px]"><path d="M0 8h9" stroke="#eee" strokeWidth="2.5" /></Svg></button>
        <button aria-label="还原视口"><Svg box={10} className="h-[10px] w-[10px]"><path d="M1 4h5v5H1zM3 3V1h6v6H7" stroke="#eee" strokeWidth="1.5" /></Svg></button>
        <button aria-label="关闭视口"><Svg box={10} className="h-[10px] w-[10px]"><path d="M1 1l7 8M8 1L1 9" stroke="#eee" strokeWidth="2.2" /></Svg></button>
      </div>
      <ViewCube />
      <button className="absolute right-[41px] top-[150px] flex h-[17px] w-11 items-center justify-between rounded border border-[#999ca5] bg-[#81848f] px-[3px] font-['Liberation_Sans',sans-serif] text-[11px] leading-4 text-[#3f434d]">
        WCS
        <svg viewBox="0 0 8 5" className="h-[5px] w-2"><path d="M0 0h8L4 5z" fill="none" stroke="#9fa2ab" /></svg>
      </button>
      <NavBar />

      <div className="absolute left-[972px] top-[210px] flex h-[23px] w-[127px] items-start justify-between border border-[#15181d] bg-[#8e8e8e] px-[2px] pt-px text-xs leading-[18px] text-[#1e1e1e]">
        选择第一个对象或
        <svg viewBox="0 0 11 11" className="mt-[6px] h-[11px] w-[11px]">
          <rect width="11" height="11" fill="#3a3f9c" />
          <rect x="1" y="1" width="8" height="8" fill="#f2f2f2" />
          <path d="M5 2v4M3 4h4M3 7h4" stroke="#222" />
        </svg>
      </div>

      <div className="absolute left-[489px] top-[287px] h-[133px] w-[267px] bg-[#84b0ee] pl-[50px] pt-[14px] text-xl leading-[35px] font-bold text-[#e9ecef] font-['Noto_Sans_CJK_SC',sans-serif]">
        <p>小提示：</p>
        <p>输入命令F进行倒角</p>
      </div>

      <svg viewBox="0 0 72 80" className="absolute bottom-[2px] left-0 h-20 w-[72px]" fill="none" stroke="#d8dade" strokeWidth="1.5" aria-hidden="true">
        <path d="M4 18v47h47M0 61h8v8H0zM5 3l6 6 6-6M11 9v6M55 52l13 13M68 52L55 65" />
      </svg>
      <CommandLine />
    </main>
  );
}

function StatusBar() {
  const [layout, setLayout] = useState("模型");
  return (
    <footer className="flex h-[22px] items-start justify-between bg-[#414141] text-xs text-[#9a9a9a]">
      <div className="flex">
        {["模型", "布局1", "布局2"].map((t) => (
          <button
            key={t}
            onClick={() => setLayout(t)}
            className={
              t === layout
                ? "h-[18px] w-[45px] rounded-b-md bg-[#7a7a76] font-bold text-white [clip-path:polygon(0_0,100%_0,calc(100%-8px)_100%,8px_100%)]"
                : "h-[18px] w-[51px] rounded-b-md bg-[#5a5a5a] [clip-path:polygon(0_0,100%_0,calc(100%-8px)_100%,8px_100%)]"
            }
          >
            {t}
          </button>
        ))}
        <button aria-label="新建布局" className="ml-[2px] flex h-[18px] w-[22px] items-center justify-center rounded-b-md bg-[#555]">
          <Svg box={8} className="h-2 w-2"><path d="M4 0v8M0 4h8" stroke="#eee" strokeWidth="1.5" /></Svg>
        </button>
      </div>
      <div className="flex h-full w-[508px] items-center border-l border-[#777] text-[#f0f0f0]">
        <button className="h-full w-7 border-r border-[#777] pt-1">模型</button>
        <button aria-label="栅格" className="flex w-6 justify-center pt-1">
          <Svg>
            <path d="M0 3h16M0 8h16M0 13h16" stroke="#24509a" />
            <path d="M3 1v14M6 1v14M10 1v14M13 1v14" stroke="#2f78e8" strokeWidth="1.5" />
          </Svg>
        </button>
        <button aria-label="捕捉" className="flex w-5 justify-center pt-1">
          <Svg><path d="M1 2h15M1 6h15M1 10h15M1 14h15" stroke="#aaa" strokeDasharray="1 2" /></Svg>
        </button>
        <span className="pl-[6px] pt-1"><Caret className="h-[4px] w-[7px]" /></span>
        <button aria-label="正交" className="ml-2 flex h-full items-center border-l border-[#777] pl-1 pt-1">
          <Svg><path d="M2 1v12h12M2 8h5v5" stroke="#bbb" /></Svg>
        </button>
        <button aria-label="自定义" className="ml-auto">
          <Svg className="h-4 w-[10px]"><path d="M0 2h16M0 7h16M0 12h16" stroke="#ddd" strokeWidth="2" /></Svg>
        </button>
      </div>
    </footer>
  );
}

const VideoMark = () => (
  <svg viewBox="0 0 196 52" className="pointer-events-none absolute left-10 top-10 h-[52px] w-[196px] font-['Noto_Sans_CJK_SC',sans-serif]">
    <g fill="#fff" stroke="#2c2c2c" strokeWidth="5" strokeLinejoin="round" paintOrder="stroke" fontStyle="italic" fontWeight="700">
      <text x="3" y="37" fontSize="35">秒</text>
      <text x="40" y="38" fontSize="35" fontWeight="500">d</text>
      <text x="82" y="38" fontSize="33" fontWeight="500">ng</text>
      <text x="119" y="37" fontSize="34">视频</text>
    </g>
    <circle cx="72" cy="28" r="11" fill="#2c2c2c" />
    <circle cx="72" cy="28" r="9.500" fill="#3f86ea" />
    <path d="M69 23l9 5-9 5z" fill="#fff" />
    <path d="M72 9l4 4 5-4" stroke="#f2dc2e" strokeWidth="3" fill="none" />
  </svg>
);

const SiteLogo = () => (
  <a href="#civilcn" className="absolute bottom-0 right-[10px] bg-white">
    <svg viewBox="0 0 398 199" className="block h-[199px] w-[398px] font-['Noto_Sans','Noto_Sans_CJK_SC',sans-serif]">
      <path d="M45 93C58 70 92 54 116 56c25 2 30 20 20 38-1-14-6-27-28-29-24-2-48 11-63 28z" fill="#8fc31f" />
      <path d="M41 95c-8 16 0 31 24 30 32-1 62-16 77-33-8 26-43 51-74 49-30-3-40-24-27-46z" fill="#1d4598" />
      <g fill="#d9dadc">
        <path d="M89 71l17 7v8l-12 6v32h-5z" />
        <path d="M116 93l13 4-13 12z" />
      </g>
      <linearGradient id="tower" x1="0" y1="0" x2="0" y2="1">
        <stop offset="0" stopColor="#1d4598" />
        <stop offset="1" stopColor="#4f86c6" />
      </linearGradient>
      <path d="M45 105l15-7v26l-12-5z" fill="#1d4598" />
      <path d="M68 78l18-9v55H68z" fill="url(#tower)" />
      <path d="M97 96l16-8v26l-16 8z" fill="#1d4598" />
      <text x="142" y="106" fontSize="44" fontWeight="900" fontStyle="italic" stroke="#000" strokeWidth="1">土木工程网</text>
      <text x="143" y="132" fontSize="28" fontWeight="500" fontStyle="italic">www.civilcn.com</text>
    </svg>
  </a>
);

export default function App() {
  return (
    <div className="relative flex h-screen flex-col overflow-hidden bg-[#404040] font-['Noto_Sans','Noto_Sans_CJK_SC',sans-serif]">
      <Header />
      <Ribbon />
      <FileTabs />
      <Canvas />
      <StatusBar />
      <VideoMark />
      <SiteLogo />
    </div>
  );
}
